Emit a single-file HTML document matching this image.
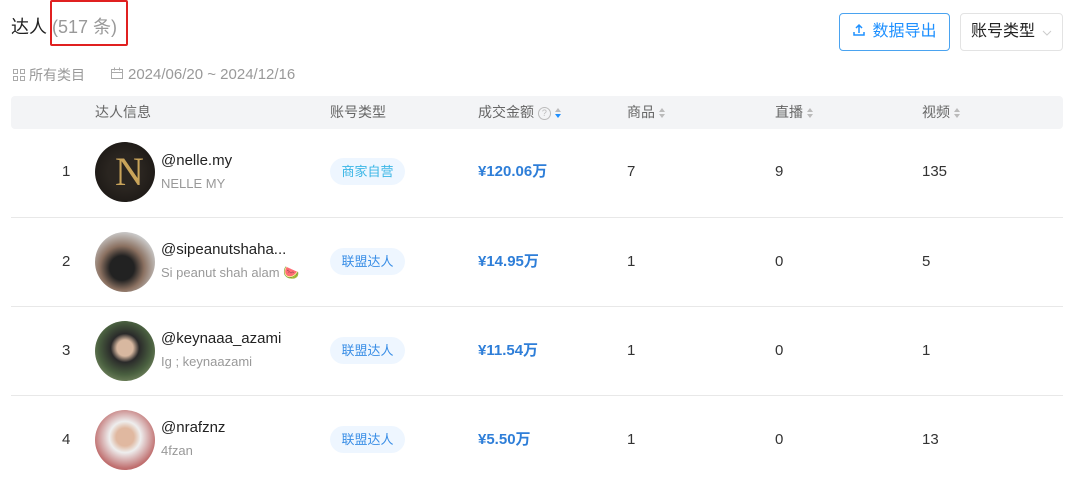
<!DOCTYPE html><html><head><meta charset="utf-8"><style>
*{margin:0;padding:0;box-sizing:border-box}
body{width:1080px;height:482px;background:#fff;font-family:"Liberation Sans","Noto Sans CJK SC",sans-serif;position:relative;overflow:hidden;color:#333}
.a{position:absolute;white-space:nowrap;line-height:20px}
.hdr{position:absolute;left:11px;top:96px;width:1052px;height:33px;background:#f3f4f6;border-radius:4px}
.th{font-size:14px;color:#666;top:102px}
.sort{display:inline-block;vertical-align:middle;margin-left:4px;width:7px;height:10px;position:relative}
.sort:before,.sort:after{content:"";position:absolute;left:0;border-left:3.5px solid transparent;border-right:3.5px solid transparent}
.sort:before{top:0;border-bottom:4px solid #bbb}
.sort:after{bottom:0;border-top:4px solid #bbb}
.sort.b:after{border-top-color:#1e90ff}
.sep{position:absolute;left:11px;width:1052px;height:1px;background:#e8e8e8}
.av{position:absolute;left:95px;width:60px;height:60px;border-radius:50%}
.nm{font-size:15px;color:#222;left:161px}
.sub{font-size:13px;color:#999;left:161px}
.tag{position:absolute;left:330px;height:27px;width:75px;border-radius:14px;background:#eef6ff;color:#3a8ee6;font-size:13px;text-align:center;line-height:27px}
.amt{font-size:15px;color:#2e7ed8;font-weight:bold;left:478px}
.n{font-size:15px;color:#333}
</style></head><body>
<div class="a" style="left:11px;top:16px;font-size:18px;color:#222;line-height:22px">达人 <span style="color:#999">(517 条)</span></div>
<div style="position:absolute;left:50px;top:0;width:78px;height:46px;border:2px solid #e02020;border-radius:2px"></div>
<div style="position:absolute;left:839px;top:13px;width:111px;height:38px;border:1px solid #4aa3f0;border-radius:4px;color:#1e90ff;font-size:16px;line-height:36px;text-align:center">
<svg width="14" height="14" viewBox="0 0 14 14" style="vertical-align:-1px;margin-right:6px"><path d="M7 10V2M4 5l3-3 3 3M2 9v3h10V9" fill="none" stroke="#1e90ff" stroke-width="1.5"/></svg>数据导出</div>
<div style="position:absolute;left:960px;top:13px;width:103px;height:38px;border:1px solid #e3e3e3;border-radius:4px;font-size:16px;line-height:36px;padding-left:10px;color:#222">账号类型<svg width="10" height="6" viewBox="0 0 10 6" style="position:absolute;right:10px;top:16px"><path d="M1 1l4 4 4-4" fill="none" stroke="#ccc"/></svg></div>
<div class="a" style="left:13px;top:65px;font-size:14px;color:#999"><svg width="12" height="12" viewBox="0 0 12 12" style="vertical-align:-1px;margin-right:4px"><g fill="none" stroke="#aaa"><rect x="0.5" y="0.5" width="4" height="4"/><rect x="7.5" y="0.5" width="4" height="4"/><rect x="0.5" y="7.5" width="4" height="4"/><rect x="7.5" y="7.5" width="4" height="4"/></g></svg>所有类目</div>
<div class="a" style="left:110px;top:65px;font-size:15px;color:#999"><svg width="14" height="14" viewBox="0 0 14 14" style="vertical-align:-1px;margin-right:4px"><path d="M1.5 3.5h11v9h-11zM1.5 6.5h11M4.5 1.5v3M9.5 1.5v3" fill="none" stroke="#aaa"/></svg>2024/06/20 ~ 2024/12/16</div>
<div class="hdr"></div>
<div class="a th" style="left:95px">达人信息</div>
<div class="a th" style="left:330px">账号类型</div>
<div class="a th" style="left:478px">成交金额 <span style="display:inline-block;width:13px;height:13px;border:1px solid #bbb;border-radius:50%;font-size:9px;text-align:center;line-height:11px;color:#bbb;vertical-align:middle">?</span><span class="sort b"></span></div>
<div class="a th" style="left:627px">商品<span class="sort"></span></div>
<div class="a th" style="left:775px">直播<span class="sort"></span></div>
<div class="a th" style="left:922px">视频<span class="sort"></span></div>

<div class="a n" style="left:62px;top:162px">1</div>
<div class="av" style="top:142px;background:radial-gradient(circle,#2a2520 40%,#151210);"><div style="position:absolute;left:20px;top:8px;color:#c9a45a;font-family:'Liberation Serif',serif;font-size:40px;line-height:44px">N</div></div>
<div class="a nm" style="top:151px">@nelle.my</div><div class="a sub" style="top:174px">NELLE MY</div>
<div class="tag" style="top:158px;color:#3ab6e6">商家自营</div>
<div class="a amt" style="top:162px">¥120.06万</div>
<div class="a n" style="left:627px;top:162px">7</div><div class="a n" style="left:775px;top:162px">9</div><div class="a n" style="left:922px;top:162px">135</div>
<div class="sep" style="top:217px"></div>

<div class="a n" style="left:62px;top:252px">2</div>
<div class="av" style="top:232px;background:radial-gradient(circle at 45% 60%,#222 25%,#8a7060 45%,#ccc 75%)"></div>
<div class="a nm" style="top:240px">@sipeanutshaha...</div><div class="a sub" style="top:263px">Si peanut shah alam 🍉</div>
<div class="tag" style="top:248px">联盟达人</div>
<div class="a amt" style="top:252px">¥14.95万</div>
<div class="a n" style="left:627px;top:252px">1</div><div class="a n" style="left:775px;top:252px">0</div><div class="a n" style="left:922px;top:252px">5</div>
<div class="sep" style="top:306px"></div>

<div class="a n" style="left:62px;top:341px">3</div>
<div class="av" style="top:321px;background:radial-gradient(circle at 50% 45%,#d8b8a0 18%,#2a2a2a 32%,#4a6040 60%,#8a9a70 90%)"></div>
<div class="a nm" style="top:329px">@keynaaa_azami</div><div class="a sub" style="top:352px">Ig ; keynaazami</div>
<div class="tag" style="top:337px">联盟达人</div>
<div class="a amt" style="top:341px">¥11.54万</div>
<div class="a n" style="left:627px;top:341px">1</div><div class="a n" style="left:775px;top:341px">0</div><div class="a n" style="left:922px;top:341px">1</div>
<div class="sep" style="top:395px"></div>

<div class="a n" style="left:62px;top:430px">4</div>
<div class="av" style="top:410px;background:radial-gradient(circle at 50% 45%,#e0b8a0 20%,#eee 35%,#c07070 70%,#b05050 95%)"></div>
<div class="a nm" style="top:418px">@nrafznz</div><div class="a sub" style="top:441px">4fzan</div>
<div class="tag" style="top:426px">联盟达人</div>
<div class="a amt" style="top:430px">¥5.50万</div>
<div class="a n" style="left:627px;top:430px">1</div><div class="a n" style="left:775px;top:430px">0</div><div class="a n" style="left:922px;top:430px">13</div>
</body></html>
